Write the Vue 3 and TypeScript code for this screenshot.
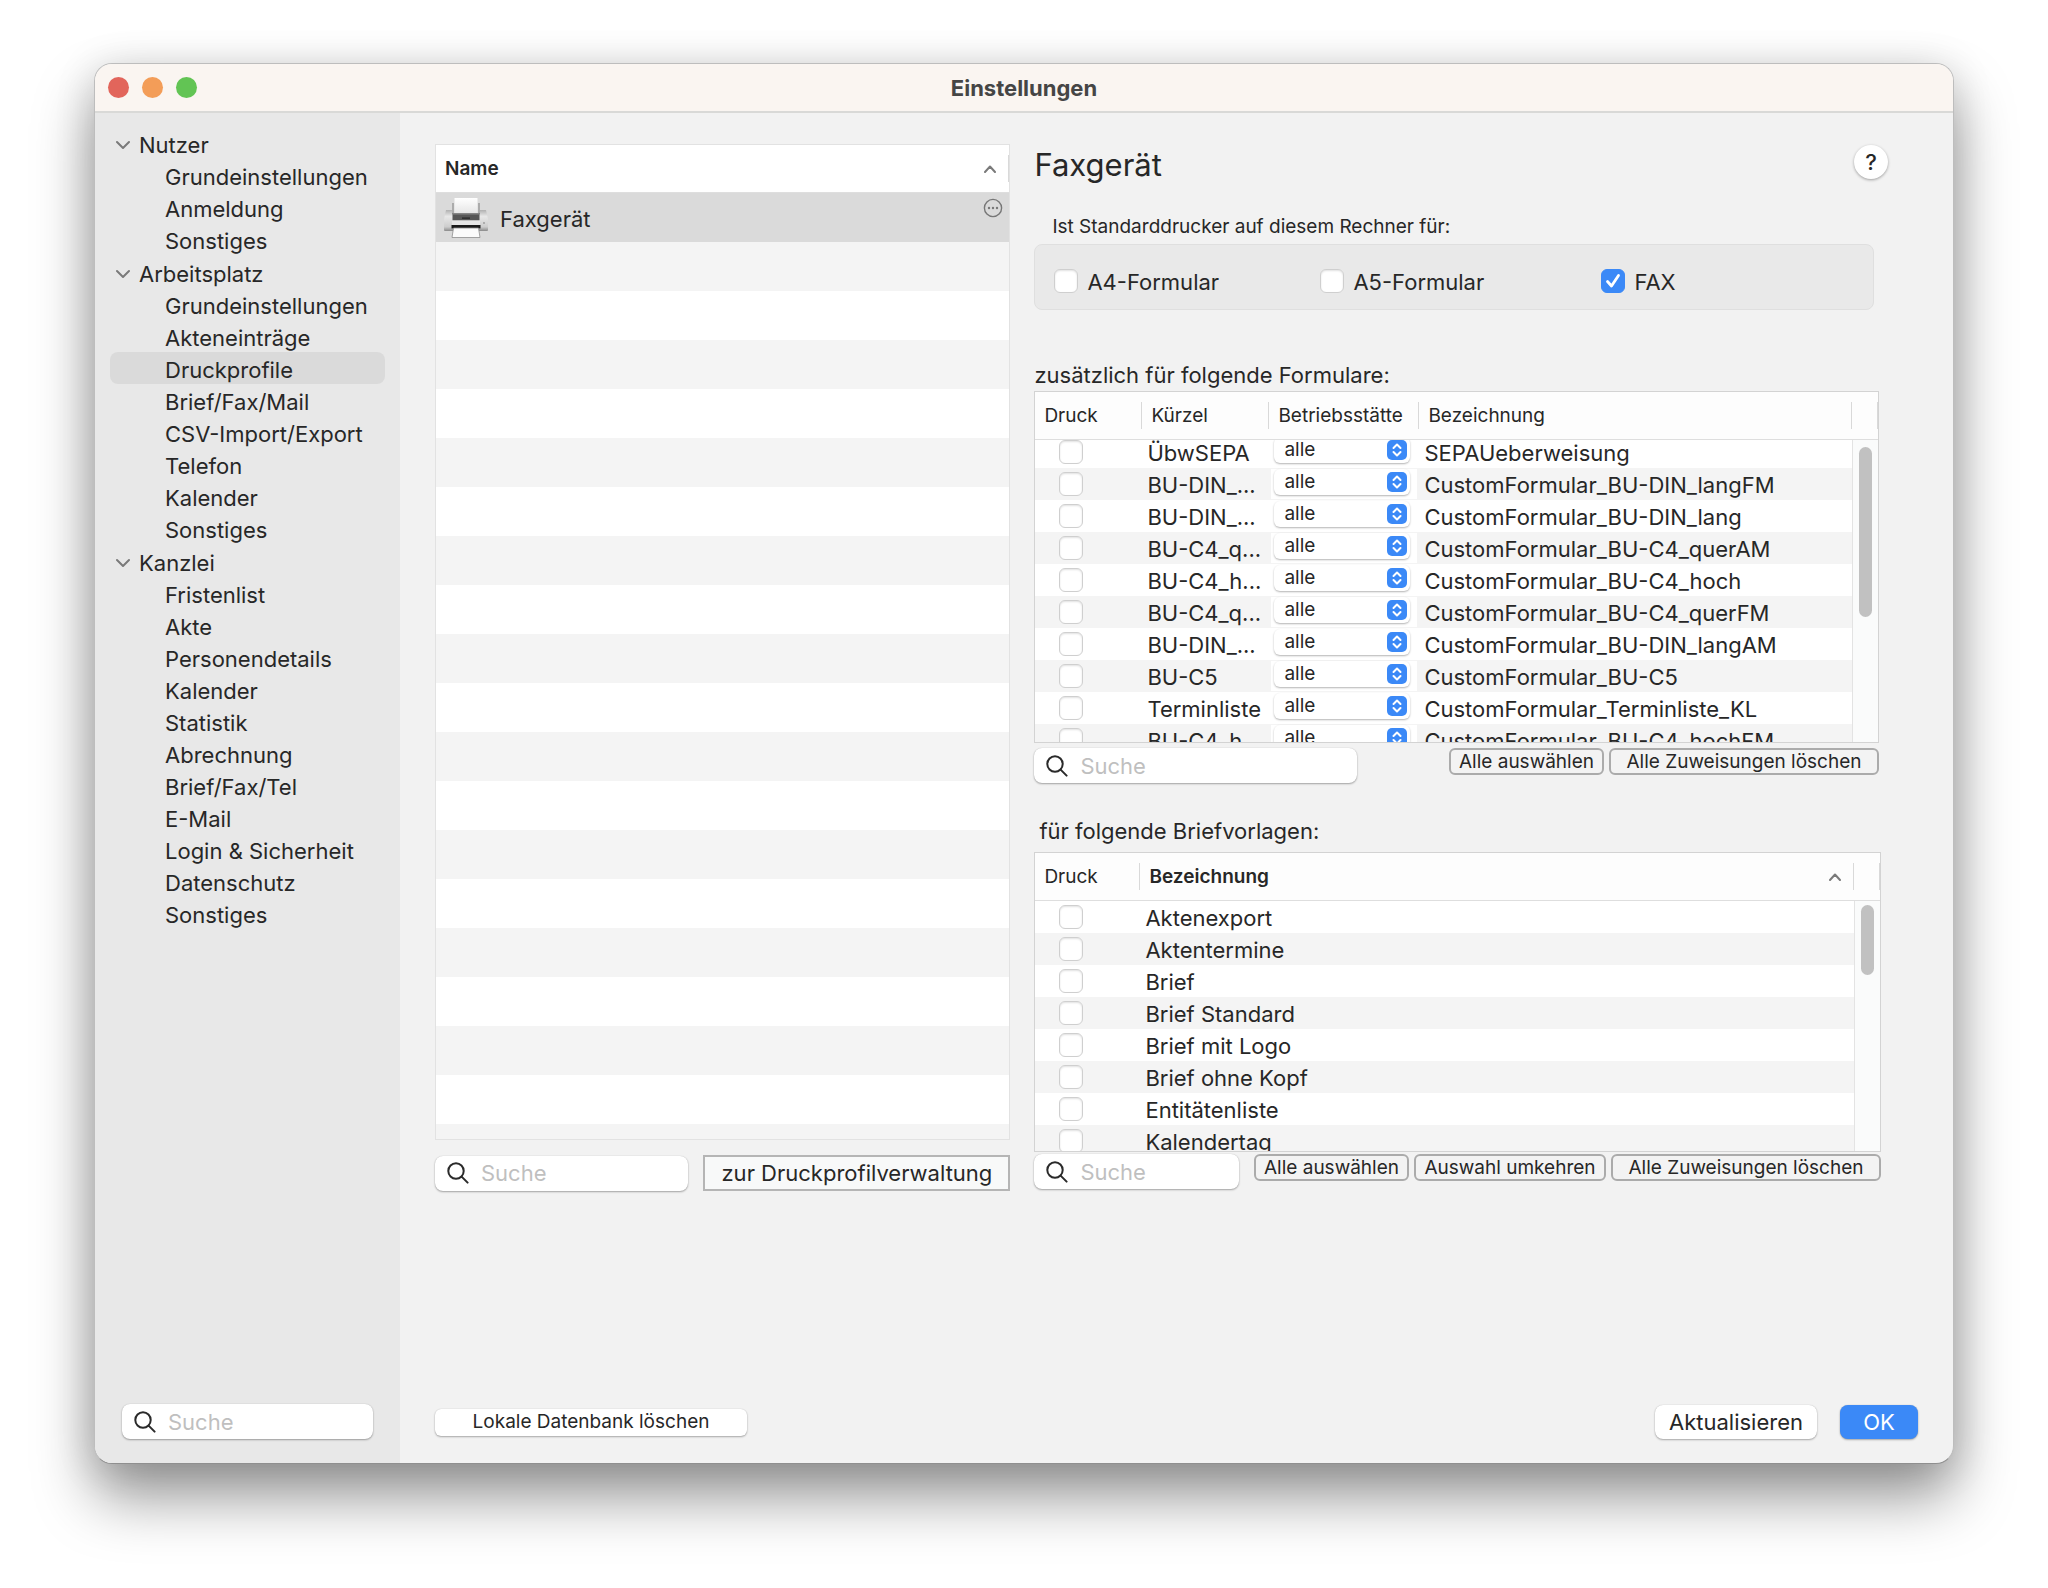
<script setup lang="ts">
import { onMounted, ref } from 'vue'

interface NavItem {
  label: string
  active?: boolean
}
interface NavGroup {
  label: string
  items: NavItem[]
}
interface FormRow {
  short: string
  name: string
}

const toItems = (labels: string[]): NavItem[] => labels.map((label) => ({ label }))

const groups: NavGroup[] = [
  { label: 'Nutzer', items: toItems(['Grundeinstellungen', 'Anmeldung', 'Sonstiges']) },
  {
    label: 'Arbeitsplatz',
    items: [
      { label: 'Grundeinstellungen' },
      { label: 'Akteneinträge' },
      { label: 'Druckprofile', active: true },
      { label: 'Brief/Fax/Mail' },
      { label: 'CSV-Import/Export' },
      { label: 'Telefon' },
      { label: 'Kalender' },
      { label: 'Sonstiges' },
    ],
  },
  {
    label: 'Kanzlei',
    items: toItems([
      'Fristenlist',
      'Akte',
      'Personendetails',
      'Kalender',
      'Statistik',
      'Abrechnung',
      'Brief/Fax/Tel',
      'E-Mail',
      'Login & Sicherheit',
      'Datenschutz',
      'Sonstiges',
    ]),
  },
]

const defaults = ref([
  { label: 'A4-Formular', checked: false },
  { label: 'A5-Formular', checked: false },
  { label: 'FAX', checked: true },
])

const forms: FormRow[] = [
  { short: 'ÜbwSEPA', name: 'SEPAUeberweisung' },
  { short: 'BU-DIN_...', name: 'CustomFormular_BU-DIN_langFM' },
  { short: 'BU-DIN_...', name: 'CustomFormular_BU-DIN_lang' },
  { short: 'BU-C4_q...', name: 'CustomFormular_BU-C4_querAM' },
  { short: 'BU-C4_h...', name: 'CustomFormular_BU-C4_hoch' },
  { short: 'BU-C4_q...', name: 'CustomFormular_BU-C4_querFM' },
  { short: 'BU-DIN_...', name: 'CustomFormular_BU-DIN_langAM' },
  { short: 'BU-C5', name: 'CustomFormular_BU-C5' },
  { short: 'Terminliste', name: 'CustomFormular_Terminliste_KL' },
  { short: 'BU-C4_h...', name: 'CustomFormular_BU-C4_hochFM' },
]

const templates: string[] = [
  'Aktenexport',
  'Aktentermine',
  'Brief',
  'Brief Standard',
  'Brief mit Logo',
  'Brief ohne Kopf',
  'Entitätenliste',
  'Kalendertag',
]

const formsList = ref<HTMLElement | null>(null)
onMounted(() => {
  if (formsList.value) formsList.value.scrollTop = 4
})
</script>

<template>
  <div class="desktop">
    <div class="window">
      <header class="titlebar">
        <div class="lights">
          <button class="light red" aria-label="Schließen"></button>
          <button class="light orange" aria-label="Minimieren"></button>
          <button class="light green" aria-label="Zoomen"></button>
        </div>
        <div class="title">Einstellungen</div>
      </header>

      <div class="body">
        <aside class="sidebar">
          <nav class="tree">
            <div v-for="group in groups" :key="group.label" class="group">
              <button class="group-head">
                <svg class="chevron" viewBox="0 0 14 10" aria-hidden="true">
                  <path d="M1 2 L7 8 L13 2" />
                </svg>
                {{ group.label }}
              </button>
              <a
                v-for="item in group.items"
                :key="item.label"
                href="#"
                class="item"
                :class="{ active: item.active }"
                >{{ item.label }}</a
              >
            </div>
          </nav>
          <label class="search">
            <svg class="lens" viewBox="0 0 22 22" aria-hidden="true">
              <circle cx="9" cy="9" r="7.7" />
              <path d="M14.6 14.6 L20.6 20.6" />
            </svg>
            <input type="text" placeholder="Suche" aria-label="Einstellungen suchen" />
          </label>
        </aside>

        <main class="main">
          <div class="columns">
            <section class="master">
              <div class="printers">
                <table>
                  <thead>
                    <tr>
                      <th class="sorted">
                        <div class="sort-head">
                          Name
                          <svg class="caret" viewBox="0 0 12 8" aria-hidden="true">
                            <path d="M1 7 L6 1.5 L11 7" />
                          </svg>
                        </div>
                      </th>
                    </tr>
                  </thead>
                  <tbody>
                    <tr class="selected">
                      <td>
                        <div class="printer">
                          <svg class="printer-icon" viewBox="0 0 46 42" aria-hidden="true">
                            <defs>
                              <linearGradient id="paper" x1="0" y1="0" x2="0" y2="1">
                                <stop offset="0" stop-color="#ffffff" />
                                <stop offset="1" stop-color="#e6e6e6" />
                              </linearGradient>
                              <linearGradient id="shell" x1="0" y1="0" x2="0" y2="1">
                                <stop offset="0" stop-color="#b0b0b0" />
                                <stop offset="0.3" stop-color="#e8e8e8" />
                                <stop offset="0.8" stop-color="#cdcdcd" />
                                <stop offset="1" stop-color="#8a8a8a" />
                              </linearGradient>
                            </defs>
                            <path d="M10 6 V17 H36 V6" fill="none" stroke="#979797" stroke-width="1.4" />
                            <path
                              d="M3 13 H9 V17 H37 V13 H43 L45 22 V33 Q45 34 44 34 H2 Q1 34 1 33 V22 Z"
                              fill="url(#shell)"
                            />
                            <rect x="11.5" y="1" width="23" height="15" fill="url(#paper)" />
                            <rect x="9.5" y="16" width="27" height="7.5" fill="#565656" />
                            <rect x="9.5" y="16" width="27" height="1.5" fill="#858585" />
                            <rect x="19" y="20.5" width="8" height="1.2" fill="#222" />
                            <rect x="9" y="23.5" width="28" height="4.5" fill="#e6e6e6" />
                            <rect x="8.5" y="28" width="29" height="3.4" fill="#1a1a1a" />
                            <path d="M10.5 31 H35.5 L37 40.5 H9 Z" fill="#fbfbfb" stroke="#8e8e8e" stroke-width="0.8" />
                            <circle cx="41" cy="26" r="0.9" fill="#999" />
                          </svg>
                          <span class="printer-name">Faxgerät</span>
                          <button class="more" aria-label="Mehr">
                            <svg viewBox="0 0 20 20" aria-hidden="true">
                              <circle cx="10" cy="10" r="8.6" fill="none" stroke="#777" stroke-width="1.4" />
                              <circle cx="6" cy="10" r="1.2" fill="#777" />
                              <circle cx="10" cy="10" r="1.2" fill="#777" />
                              <circle cx="14" cy="10" r="1.2" fill="#777" />
                            </svg>
                          </button>
                        </div>
                      </td>
                    </tr>
                  </tbody>
                </table>
                <div class="empty-rows"></div>
              </div>
              <div class="master-tools">
                <label class="search">
                  <svg class="lens" viewBox="0 0 22 22" aria-hidden="true">
                    <circle cx="9" cy="9" r="7.7" />
                    <path d="M14.6 14.6 L20.6 20.6" />
                  </svg>
                  <input type="text" placeholder="Suche" aria-label="Drucker suchen" />
                </label>
                <button class="square">zur Druckprofilverwaltung</button>
              </div>
            </section>

            <section class="detail">
              <div class="detail-head">
                <h1>Faxgerät</h1>
                <button class="help" aria-label="Hilfe">?</button>
              </div>

              <fieldset class="defaults">
                <legend>Ist Standarddrucker auf diesem Rechner für:</legend>
                <div class="defaults-box">
                  <label v-for="entry in defaults" :key="entry.label" class="check-label">
                    <input v-model="entry.checked" type="checkbox" class="check" />
                    <span class="check-text">{{ entry.label }}</span>
                  </label>
                </div>
              </fieldset>

              <div class="block forms">
                <h2>zusätzlich für folgende Formulare:</h2>
                <div class="frame">
                  <div ref="formsList" class="scroller">
                    <table>
                      <colgroup>
                        <col class="c-print" />
                        <col class="c-short" />
                        <col class="c-place" />
                        <col />
                        <col class="c-bar" />
                      </colgroup>
                      <thead>
                        <tr>
                          <th>Druck</th>
                          <th>Kürzel</th>
                          <th>Betriebsstätte</th>
                          <th>Bezeichnung</th>
                          <th></th>
                        </tr>
                      </thead>
                      <tbody>
                        <tr v-for="(row, i) in forms" :key="i">
                          <td class="tick"><input type="checkbox" class="check" :aria-label="row.name" /></td>
                          <td>{{ row.short }}</td>
                          <td class="place">
                            <div class="popup">
                              <select :aria-label="'Betriebsstätte ' + row.name">
                                <option>alle</option>
                              </select>
                              <svg class="stepper" viewBox="0 0 20 20" aria-hidden="true">
                                <rect width="20" height="20" rx="5" />
                                <path d="M6.5 8 L10 4.5 L13.5 8 M6.5 12 L10 15.5 L13.5 12" />
                              </svg>
                            </div>
                          </td>
                          <td>{{ row.name }}</td>
                          <td></td>
                        </tr>
                      </tbody>
                    </table>
                  </div>
                  <div class="track"><div class="thumb"></div></div>
                </div>
                <div class="tools">
                  <label class="search">
                    <svg class="lens" viewBox="0 0 22 22" aria-hidden="true">
                      <circle cx="9" cy="9" r="7.7" />
                      <path d="M14.6 14.6 L20.6 20.6" />
                    </svg>
                    <input type="text" placeholder="Suche" aria-label="Formulare suchen" />
                  </label>
                  <div class="actions">
                    <button class="small">Alle auswählen</button>
                    <button class="small wide">Alle Zuweisungen löschen</button>
                  </div>
                </div>
              </div>

              <div class="block letters">
                <h2>für folgende Briefvorlagen:</h2>
                <div class="frame">
                  <div class="scroller">
                    <table>
                      <colgroup>
                        <col class="c-print" />
                        <col />
                        <col class="c-bar" />
                      </colgroup>
                      <thead>
                        <tr>
                          <th>Druck</th>
                          <th class="sorted">
                            <div class="sort-head">
                              Bezeichnung
                              <svg class="caret" viewBox="0 0 12 8" aria-hidden="true">
                                <path d="M1 7 L6 1.5 L11 7" />
                              </svg>
                            </div>
                          </th>
                          <th></th>
                        </tr>
                      </thead>
                      <tbody>
                        <tr v-for="name in templates" :key="name">
                          <td class="tick"><input type="checkbox" class="check" :aria-label="name" /></td>
                          <td>{{ name }}</td>
                          <td></td>
                        </tr>
                      </tbody>
                    </table>
                  </div>
                  <div class="track"><div class="thumb"></div></div>
                </div>
                <div class="tools">
                  <label class="search">
                    <svg class="lens" viewBox="0 0 22 22" aria-hidden="true">
                      <circle cx="9" cy="9" r="7.7" />
                      <path d="M14.6 14.6 L20.6 20.6" />
                    </svg>
                    <input type="text" placeholder="Suche" aria-label="Briefvorlagen suchen" />
                  </label>
                  <div class="actions">
                    <button class="small">Alle auswählen</button>
                    <button class="small invert">Auswahl umkehren</button>
                    <button class="small wide">Alle Zuweisungen löschen</button>
                  </div>
                </div>
              </div>
            </section>
          </div>

          <footer class="footer">
            <button class="push compact">Lokale Datenbank löschen</button>
            <div class="footer-right">
              <button class="push">Aktualisieren</button>
              <button class="push primary">OK</button>
            </div>
          </footer>
        </main>
      </div>
    </div>
  </div>
</template>

<style>
body {
  margin: 0;
  background: #fff;
}
</style>

<style scoped>
* {
  box-sizing: border-box;
}
.desktop {
  min-height: 100vh;
  padding: 63px 94px 124px;
  display: flex;
  font-family: Inter, 'Liberation Sans', sans-serif;
  font-size: 22px;
  line-height: 32px;
  color: #272727;
  overflow: hidden;
}
button,
input,
select {
  font: inherit;
  color: inherit;
  margin: 0;
}
button {
  padding: 0;
  border: 0;
  background: none;
  white-space: nowrap;
}
.window {
  flex: 1;
  min-width: 0;
  display: flex;
  flex-direction: column;
  border: 1px solid #bdbdbd;
  border-bottom-color: #8f8f8f;
  border-radius: 18px;
  overflow: hidden;
  background: #f2f2f2;
  box-shadow: 0 34px 60px rgba(0, 0, 0, 0.4), 0 4px 40px rgba(0, 0, 0, 0.14);
}
.titlebar {
  height: 49px;
  display: flex;
  align-items: center;
  justify-content: center;
  position: relative;
  background: #faf5f1;
  border-bottom: 2px solid #d9d9d7;
}
.title {
  font-weight: 700;
  color: #454545;
}
.lights {
  position: absolute;
  left: 13px;
  display: flex;
  gap: 13px;
}
.light {
  width: 21px;
  height: 21px;
  border-radius: 50%;
}
.red {
  background: #e2655b;
}
.orange {
  background: #f39d58;
}
.green {
  background: #62c454;
}
.body {
  flex: 1;
  display: flex;
}
.sidebar {
  width: 305px;
  display: flex;
  flex-direction: column;
  justify-content: space-between;
  padding: 14px 27px 24px;
  background: #e8e8e8;
}
.tree {
  margin: 0 -12px;
}
.group {
  margin-bottom: 1px;
}
.group-head {
  display: flex;
  align-items: center;
  height: 32px;
  gap: 9px;
  padding: 4px 0 0 6px;
}
.chevron {
  width: 14px;
  height: 10px;
}
.chevron path,
.caret path {
  fill: none;
  stroke: #7a7a7a;
  stroke-width: 2;
  stroke-linecap: round;
  stroke-linejoin: round;
}
.item {
  display: block;
  height: 32px;
  padding-left: 55px;
  border-radius: 8px;
  line-height: 36px;
  color: inherit;
  text-decoration: none;
}
.item.active {
  background: #dadada;
}
.search {
  display: flex;
  align-items: center;
  height: 35px;
  padding: 0 12px;
  gap: 12px;
  border-radius: 8px;
  background: #fff;
  box-shadow: 0 1px 2px rgba(0, 0, 0, 0.32), 0 0 1px rgba(0, 0, 0, 0.2);
}
.lens {
  flex: none;
  width: 22px;
  height: 22px;
  fill: none;
  stroke: #2a2a2a;
  stroke-width: 2;
  stroke-linecap: round;
}
.search input {
  flex: 1;
  min-width: 0;
  width: 0;
  height: 30px;
  padding: 0;
  border: 0;
  outline: 0;
  background: none;
}
.search input::placeholder {
  color: #bfbfbf;
  opacity: 1;
}
.main {
  flex: 1;
  min-width: 0;
  display: flex;
  flex-direction: column;
  justify-content: space-between;
  padding: 31px 35px 24px;
}
.columns {
  display: flex;
  gap: 24px;
  padding-right: 30px;
}
.master {
  flex: 575 1 0;
  min-width: 0;
}
.detail {
  flex: 853 1 0;
  min-width: 0;
}
table {
  width: 100%;
  border-collapse: separate;
  border-spacing: 0;
  table-layout: fixed;
}
th {
  position: relative;
  height: 48px;
  padding: 0 9px;
  text-align: left;
  font-size: 19px;
  font-weight: 400;
  line-height: 24px;
  white-space: nowrap;
  background: #fdfdfd;
  border-bottom: 1px solid #dedede;
}
th.sorted {
  font-weight: 600;
}
th::after {
  content: '';
  position: absolute;
  right: 0;
  top: 10px;
  width: 1px;
  height: 27px;
  background: #d9d9d9;
}
.sort-head {
  display: flex;
  align-items: center;
  justify-content: space-between;
}
.caret {
  width: 12px;
  height: 8px;
}
.printers {
  border: 1px solid #e2e2e2;
  background: #fff;
}
.printers th {
  padding: 0 13px 0 9px;
  background: #fff;
}
.printers td {
  height: 49px;
  padding: 0;
  background: #dadada;
}
.printer {
  display: flex;
  align-items: center;
  height: 49px;
  padding: 0 6px 0 7px;
}
.printer-icon {
  width: 46px;
  height: 42px;
}
.printer-name {
  flex: 1;
  padding-top: 2px;
  margin-left: 11px;
}
.more {
  align-self: flex-start;
  width: 20px;
  height: 20px;
  margin-top: 5px;
}
.more svg {
  display: block;
}
.empty-rows {
  height: 897px;
  background: repeating-linear-gradient(#f4f4f4 0 49px, #fff 49px 98px);
}
.master-tools {
  display: flex;
  align-items: center;
  gap: 15px;
  margin-top: 15px;
}
.master-tools .search {
  flex: 1;
}
.square {
  width: 307px;
  height: 36px;
  border: 2px solid #b5b5b5;
  background: #f8f9f9;
}
.detail-head {
  display: flex;
  align-items: flex-start;
  justify-content: space-between;
  height: 41px;
  padding-top: 1px;
}
h1 {
  margin: 0;
  font-size: 31px;
  line-height: 40px;
  font-weight: 400;
}
.help {
  width: 34px;
  height: 34px;
  border-radius: 50%;
  background: #fff;
  font-weight: 500;
  line-height: 34px;
  box-shadow: 0 1px 3px rgba(0, 0, 0, 0.35);
}
.defaults {
  margin: 30px 14px 0 0;
  padding: 0;
  border: 0;
}
.defaults legend {
  padding: 0 18px;
  font-size: 19px;
  line-height: 24px;
}
.defaults-box {
  display: grid;
  grid-template-columns: 266px 281px 1fr;
  align-items: center;
  height: 66px;
  margin-top: 5px;
  padding: 8px 19px 0;
  border: 1px solid #dfdfdf;
  border-radius: 8px;
  background: #e9e9e9;
}
.check-label {
  display: flex;
  align-items: center;
  gap: 9px;
}
.check-text {
  padding-top: 2px;
}
.check {
  appearance: none;
  flex: none;
  display: block;
  width: 24px;
  height: 24px;
  border: 1px solid #cfcfcf;
  border-radius: 6px;
  background: #fff;
  box-shadow: inset 0 1px 2px rgba(0, 0, 0, 0.12);
}
.check:checked {
  border-color: #3b89f7;
  box-shadow: none;
  background: #3b89f7
    url("data:image/svg+xml,%3Csvg xmlns='http://www.w3.org/2000/svg' viewBox='0 0 22 22'%3E%3Cpath d='M5.5 11.5 L9.5 16 L16.5 5.5' fill='none' stroke='white' stroke-width='2.8' stroke-linecap='round' stroke-linejoin='round'/%3E%3C/svg%3E")
    center / contain no-repeat;
}
.forms {
  margin: 49px 9px 0 0;
}
.letters {
  margin: 32px 7px 0 0;
}
h2 {
  margin: 0;
  font-size: 22px;
  line-height: 32px;
  font-weight: 400;
}
.letters h2 {
  padding: 0 5px 5px;
}
.frame {
  position: relative;
  border: 1px solid #d3d3d3;
}
.scroller {
  overflow: hidden;
  background: #fff;
}
.forms .scroller {
  height: 350px;
}
.letters .scroller {
  height: 298px;
}
.scroller thead th {
  position: sticky;
  top: 0;
  z-index: 1;
}
.letters th.sorted {
  padding-right: 13px;
}
.scroller td {
  height: 32px;
  padding: 2px 5px 0;
  line-height: 30px;
  white-space: nowrap;
}
.scroller tbody tr:nth-child(even) td {
  background: #f4f4f4;
}
.scroller td.tick {
  padding: 0 0 0 24px;
}
.c-print {
  width: 107px;
}
.letters .c-print {
  width: 105px;
}
.c-short {
  width: 127px;
}
.c-place {
  width: 150px;
}
.c-bar {
  width: 26px;
}
.scroller td.place {
  padding: 0 2px;
}
.popup {
  position: relative;
  height: 30px;
  padding: 0 7px 3px 3px;
  background: #fff;
}
.popup select {
  appearance: none;
  display: block;
  width: 100%;
  height: 26px;
  padding: 0 30px 0 10px;
  border: 0;
  border-radius: 6px;
  background: #fff;
  font-size: 19px;
  line-height: 24px;
  box-shadow: 0 1px 2px rgba(0, 0, 0, 0.3);
}
.stepper {
  position: absolute;
  right: 10px;
  top: 3px;
  width: 20px;
  height: 20px;
  pointer-events: none;
}
.stepper rect {
  fill: #3b89f7;
}
.stepper path {
  fill: none;
  stroke: #fff;
  stroke-width: 2;
  stroke-linecap: round;
  stroke-linejoin: round;
}
.track {
  position: absolute;
  top: 48px;
  right: 0;
  bottom: 0;
  width: 26px;
  padding: 7px 6px;
  border-left: 1px solid #e3e3e3;
  background: #fafbfb;
}
.thumb {
  height: 170px;
  border-radius: 7px;
  background: #c1c1c1;
}
.letters .track {
  padding-top: 4px;
}
.letters .thumb {
  height: 70px;
}
.tools {
  display: flex;
  align-items: flex-start;
  justify-content: space-between;
  padding-top: 5px;
}
.forms .search {
  flex: 0 1 323px;
}
.letters .tools {
  padding-top: 2px;
}
.letters .search {
  flex: 0 1 205px;
}
.actions {
  display: flex;
  gap: 5px;
}
.small {
  width: 155px;
  height: 27px;
  border: 2px solid #ababab;
  border-radius: 6px;
  background: #f3f3f3;
  font-size: 19px;
  line-height: 22px;
}
.small.invert {
  width: 192px;
}
.small.wide {
  width: 270px;
}
.footer {
  display: flex;
  align-items: center;
  justify-content: space-between;
}
.footer-right {
  display: flex;
  gap: 23px;
}
.push {
  height: 34px;
  padding: 0 14px;
  border-radius: 8px;
  background: #fff;
  box-shadow: 0 1px 2px rgba(0, 0, 0, 0.3), 0 0 1px rgba(0, 0, 0, 0.2);
}
.push.compact {
  width: 312px;
  height: 27px;
  border-radius: 6px;
  font-size: 19px;
  line-height: 24px;
}
.push.primary {
  width: 78px;
  background: #3b89f7;
  color: #fff;
}
</style>
